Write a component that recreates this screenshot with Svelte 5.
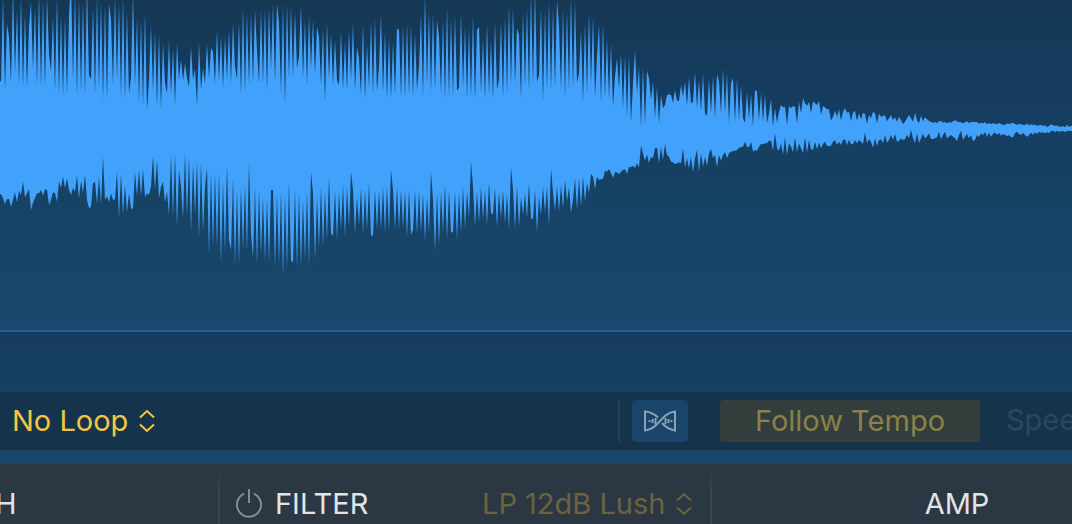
<script>
  // Sample runs: start x, then one level every 2 units. Levels are thirds of a unit.
  const upper = [
    [1, '245 -10 270 72 110 250 -30 220 30 255 -10 260 40 265 80 5 210 20 255 -20 260 0 265 -10 160 215'],
    [53, '50 275 -10 285 45 290 50 285 50 -60 240 -20 285 0 275 5 285 -40 225 238'],
    [93, '20 285 -10 265 5 300 15 300 10 60 255 -10 240 10 290 -10 300 35 280 230'],
    [133, '-20 255 55 310 60 320 35 330 240 75 275 95 320 100 328 130 250 280'],
    [169, '120 285 145 315 130 240 178 242 190 235 260 140 240 205 318 125 270 205 252 130 235 143 155 250'],
    [217, '90 242 110 265 110 240 90 250 70 200 238 65 285 20 275 40 255 40 250 30 150 250 30 248 25 275 20'],
    [271, '210 10 248 10 70 280 15 315 10 235 18 235 35 205 170 15 235 60 255 48 205 60 225 80 110'],
    [321, '255 85 305 70 235 100 255 120 240 255 95 270 125 270 90 240 70 272 140 175'],
    [361, '285 70 300 130 265 62 285 55 275 200 45 280 95 298 110 295 125 285 85 90'],
    [401, '292 75 295 70 285 75 293 100 270 200 45 290 -20 255 35 275 35 270 60 110'],
    [441, '280 60 300 20 290 55 290 45 272 262 38 265 80 295 85 290 45 300 90 80'],
    [481, '280 115 298 70 285 120 300 65 268 240 65 295 50 280 15 255 20 252 85 105'],
    [521, '298 35 260 20 275 -20 255 -30 245 225 20 305 30 270 5 270 25 265 0 80'],
    [561, '270 25 292 30 270 -10 265 5 248 220 90 308 70 280 35 255 50 292 170 72'],
    [601, '310 70 295 115 298 130 320 230 175 268 160 325 165 352 165 367 250 150 280 200 382 200 372 212 235'],
    [651, '300 245 355 260 370 285 325 315 285 283 285 308 270 302 302 255 290 245 318 232 310 305 215 325 240 335 220 340 348'],
    [709, '235 340 228 355 222 245 342 205 340 220 370 250 235 365 235 362 255 355 368 275 358 280 380 270 275'],
    [759, '360 280 365 285 370 340 298 378 325 368 335 315 322 320 375 318 325 318 320 370 305 340 295 310 318 305'],
    [811, '340 304 310 315 302 345 318 322 328 328 362 350 332 350 328 362 335 325 338 335 364 337 333 362 340'],
    [861, '358 338 342 372 345 355 335 340 370 340 350 348 345 364 355 345 360 352 365 350 360 373 365 355 345 355 365'],
    [915, '338 360 370 347 364 352 358 363 366 368 366 369 364 363 368 366 370 366 368 364 361 364 366 367 370 367 364 369 367 365 366 366 371 368 370'],
    [985, '367 373 369 373 370 371 373 369 372 374 376 370 372 370 368 372 374 373 372 375 375 371 376 373 375 374 377 376 374 378 376 381 378 373 376 377 377 379 381 378 382 375 380 378']
  ];

  const lower = [
    [1, '583 595 612 598 597 620 600 577 607 573 585 545 592 580 568 630 608 595 580 580 570 587 568 570 615 600 577 580 605'],
    [59, '545 563 530 565 535 570 585 563 575 527 597 543 580 525 600 625 620 550 545 612 530 615 470 600 588 607 580 600 598'],
    [117, '515 655 520 645 555 638 580 625 628 515 590 510 590 508 592 580 585 560 468 570 480 595 560 545 608 575 645'],
    [171, '465 650 460 683 510 560 658 460 650 470 698 490 645 485 718 485 695 560 505 765 520 740 520 745'],
    [219, '515 790 545 760 495 720 750 535 795 570 795 560 750 555 755 490 700 775 565 795 570 765 590 785 595 790'],
    [271, '570 570 803 580 795 575 830 585 805 545 780 790 570 803 575 800 600 780 575 798 515 580 780'],
    [317, '590 745 560 740 575 720 530 700 708 572 720 575 690 555 712 560 680 515 570 700'],
    [357, '590 675 565 702 570 690 550 705 708 570 690 570 688 560 698 560 695 510 570 690'],
    [397, '560 688 570 685 572 712 570 705 690 570 705 570 698 580 725 590 700 515 600 755'],
    [437, '580 735 575 695 555 718 570 695 698 575 720 575 700 560 685 575 655 485 560 680'],
    [477, '575 668 560 660 570 675 548 640 642 565 682 575 655 572 670 580 690 500 570 688'],
    [517, '560 680 590 645 580 655 548 655 658 570 698 590 645 560 640 560 678 505 580 632'],
    [557, '560 635 555 625 540 605 560 640 600 535 630 535 620 530 605 548 580 522 530 567 530 540 537 538'],
    [605, '512 515 507 520 533 517 517 523 515 510 508 522 500 502 497 505 490 502 437 460 482 463 490 470 475 445 443'],
    [659, '490 440 480 433 465 470 485 487 492 490 487 490 445 502 475 505 470 517 475 450 515 460 500 470 497'],
    [709, '460 447 475 465 502 465 482 465 457 475 460 455 453 452 450 443 442 440 425 440 442 425 455 450 452 440'],
    [761, '432 433 430 430 422 422 452 400 445 452 430 465 412 465 430 440 457 412 457 430 445 460 412 458 420'],
    [811, '448 450 425 448 428 445 432 425 438 438 437 425 420 435 425 435 420 418 435 420 432 433 420 430 420 425 432'],
    [865, '398 430 418 425 443 415 438 420 418 430 405 428 420 405 420 402 425 423 415 420 418 405 415 390 415 430 400 430 415 402'],
    [925, '415 410 400 417 417 415 412 395 418 405 395 415 410 405 410 415 423 405 392 420 410 402 415 405 423 420 405 412 400 405'],
    [985, '397 410 398 410 402 397 405 398 407 402 405 408 405 412 412 400 395 402 405 398 405 410 405 398 404 397 402 395 398 397 400 397 400 393 392 396 392 395 394 393 396 392 393 393']
  ];

  const trace = (runs) =>
    runs.flatMap(([start, levels]) =>
      levels.split(' ').map((level, i) => `${start + i * 2},${(level / 3).toFixed(1)}`)
    );

  const outline = ['-1,80', ...trace(upper), '1073,126', '1073,131', ...trace(lower).reverse(), '-1,194'].join(' ');
</script>

{#snippet chevrons()}
  <svg class="chevrons" viewBox="0 0 16 24" aria-hidden="true">
    <path d="M1 8.500 8 2l7 6.500M1 15.500 8 22l7-6.500" />
  </svg>
{/snippet}

<main>
  <section class="display">
    <svg class="wave" viewBox="0 0 1072 330" preserveAspectRatio="none" role="img" aria-label="Waveform">
      <polygon points={outline} />
    </svg>
    <div class="ruler"></div>
  </section>

  <section class="toolbar">
    <label class="picker loop">
      <select aria-label="Loop mode"><option>No Loop</option></select>
      {@render chevrons()}
    </label>
    <div class="tools">
      <button class="flex" aria-label="Flex">
        <svg viewBox="0 0 32 22" aria-hidden="true">
          <path d="M14 7.500C10.500 4 7 2 1 1.500V20.500C15 19 17 3 31 1.500V20.500C25 19.500 21.500 17 18 13" />
          <path class="bars" d="M5.500 10v2M8.500 9v4M11.500 8v6M21.500 8v6M24.500 9v4M27.500 10v2" />
        </svg>
      </button>
      <button class="follow">Follow Tempo</button>
      <span class="speed">Speed</span>
    </div>
  </section>

  <section class="modules">
    <div class="module center"><h2>PITCH</h2></div>
    <div class="module">
      <button class="power" aria-label="Filter on or off">
        <svg viewBox="0 0 28 32" aria-hidden="true">
          <path d="M9.200 5.700a12 12 0 1 0 9.600 0M14 1v14" />
        </svg>
      </button>
      <h2>FILTER</h2>
      <label class="picker type">
        <select aria-label="Filter type"><option>LP 12dB Lush</option></select>
        {@render chevrons()}
      </label>
    </div>
    <div class="module center"><h2>AMP</h2></div>
  </section>
</main>

<style>
  :global(body) {
    background: #2b3743;
  }

  main {
    overflow: hidden;
    background: #18466b;
    font: 400 29px/40px Inter, "Liberation Sans", sans-serif;
  }

  button,
  select {
    margin: 0;
    padding: 0;
    border: 0;
    background: none;
    color: inherit;
    font: inherit;
    appearance: none;
  }

  svg {
    display: block;
    fill: none;
    stroke: currentColor;
    stroke-width: 2;
  }

  .display {
    background: linear-gradient(#143854, #153b5e 20%, #164264 50%, #194b73);
  }

  .wave {
    width: 100%;
    height: 330px;
    stroke: none;
    fill: #42a1fa;
  }

  .ruler {
    height: 60px;
    border-top: 2px solid #245f98;
    background: linear-gradient(#153b5e, #164264);
  }

  .toolbar {
    display: flex;
    justify-content: space-between;
    margin-bottom: 14px;
    padding: 8px 0;
    background: #15344b;
  }

  .picker {
    display: flex;
    align-items: center;
    gap: 10px;
  }

  .chevrons {
    width: 16px;
    height: 24px;
  }

  .loop {
    padding-left: 12px;
    color: #f7c544;
  }

  .tools {
    display: flex;
    flex: 0 0 454px;
    overflow: hidden;
    border-left: 2px solid #194467;
    box-sizing: border-box;
  }

  .flex {
    display: grid;
    flex: none;
    place-items: center;
    width: 56px;
    height: 42px;
    margin-left: 12px;
    border-radius: 4px;
    background: #1a4469;
    color: #87a1b5;
  }

  .flex svg {
    width: 32px;
    height: 22px;
  }

  .follow {
    flex: none;
    width: 260px;
    margin: 0 26px 0 32px;
    border-radius: 4px;
    background: #333e3c;
    color: #8b8149;
  }

  .speed {
    color: #2a4860;
  }

  .modules {
    display: grid;
    grid-template-columns: repeat(3, 492px);
    margin-left: -272px;
    padding-top: 20px;
    background: #2b3743;
  }

  .module {
    display: flex;
    align-items: center;
    margin-top: -12px;
    padding: 12px 18px 0 15px;
    border-right: 2px solid;
    border-image: linear-gradient(#2b3743, #3b4650 40%) 1;
  }

  .center {
    justify-content: center;
    padding-inline: 0;
  }

  h2 {
    margin: 0;
    color: #e2e4e6;
    font: inherit;
  }

  .power {
    margin-right: 12px;
    color: #828b93;
  }

  .power svg {
    width: 28px;
    height: 32px;
  }

  .type {
    margin-left: auto;
    color: #6b633f;
  }
</style>
